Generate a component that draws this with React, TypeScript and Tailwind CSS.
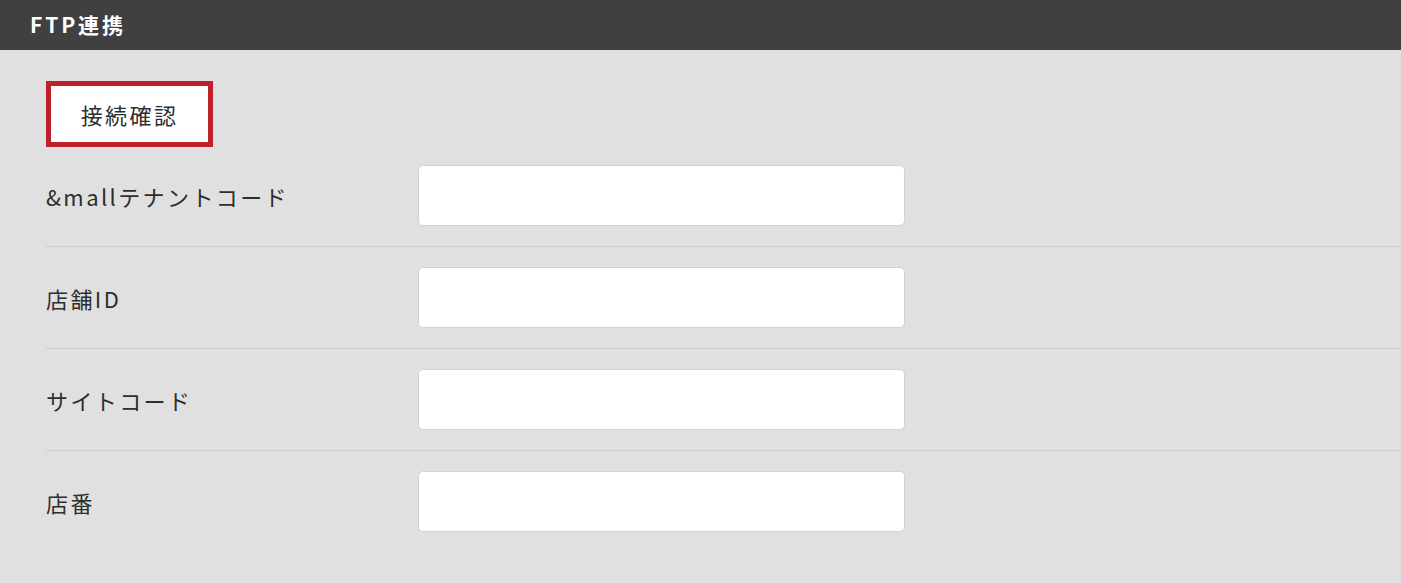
const fields = ["&mallテナントコード", "店舗ID", "サイトコード", "店番"];

export default function App() {
  return (
    <div className="min-h-[583px] bg-[#e0e0e0] font-['Noto_Sans_CJK_JP','Noto_Sans',sans-serif] text-[#333]">
      {/* Header */}
      <div className="flex h-[50px] items-center bg-[#404040] pl-[30px]">
        <h1 className="text-[21px] font-bold tracking-[2.9px] text-white">FTP連携</h1>
      </div>

      <div className="pl-[46px] pt-[31px]">
        {/* Button */}
        <button className="flex h-[66px] w-[167px] items-center justify-center border-[5px] border-[#c0202a] bg-white text-[22px] tracking-[2.4px] text-[#2e2e2e]">
          接続確認
        </button>

        {/* Form rows */}
        <div>
          {fields.map((label, i) => (
            <div
              key={label}
              className={
                "flex items-center pb-[20px] " +
                (i === 0 ? "pt-[18px] " : "pt-[20px] ") +
                (i < fields.length - 1 ? "border-b border-[#cdcdcd]" : "")
              }
            >
              <label className="w-[372px] pt-[2px] text-[22px] tracking-[2.4px] text-[#2e2e2e]">{label}</label>
              <input
                type="text"
                className="h-[61px] w-[487px] rounded-[5px] border border-[#d2d2d2] bg-white px-3 outline-none"
              />
            </div>
          ))}
        </div>
      </div>
    </div>
  );
}
